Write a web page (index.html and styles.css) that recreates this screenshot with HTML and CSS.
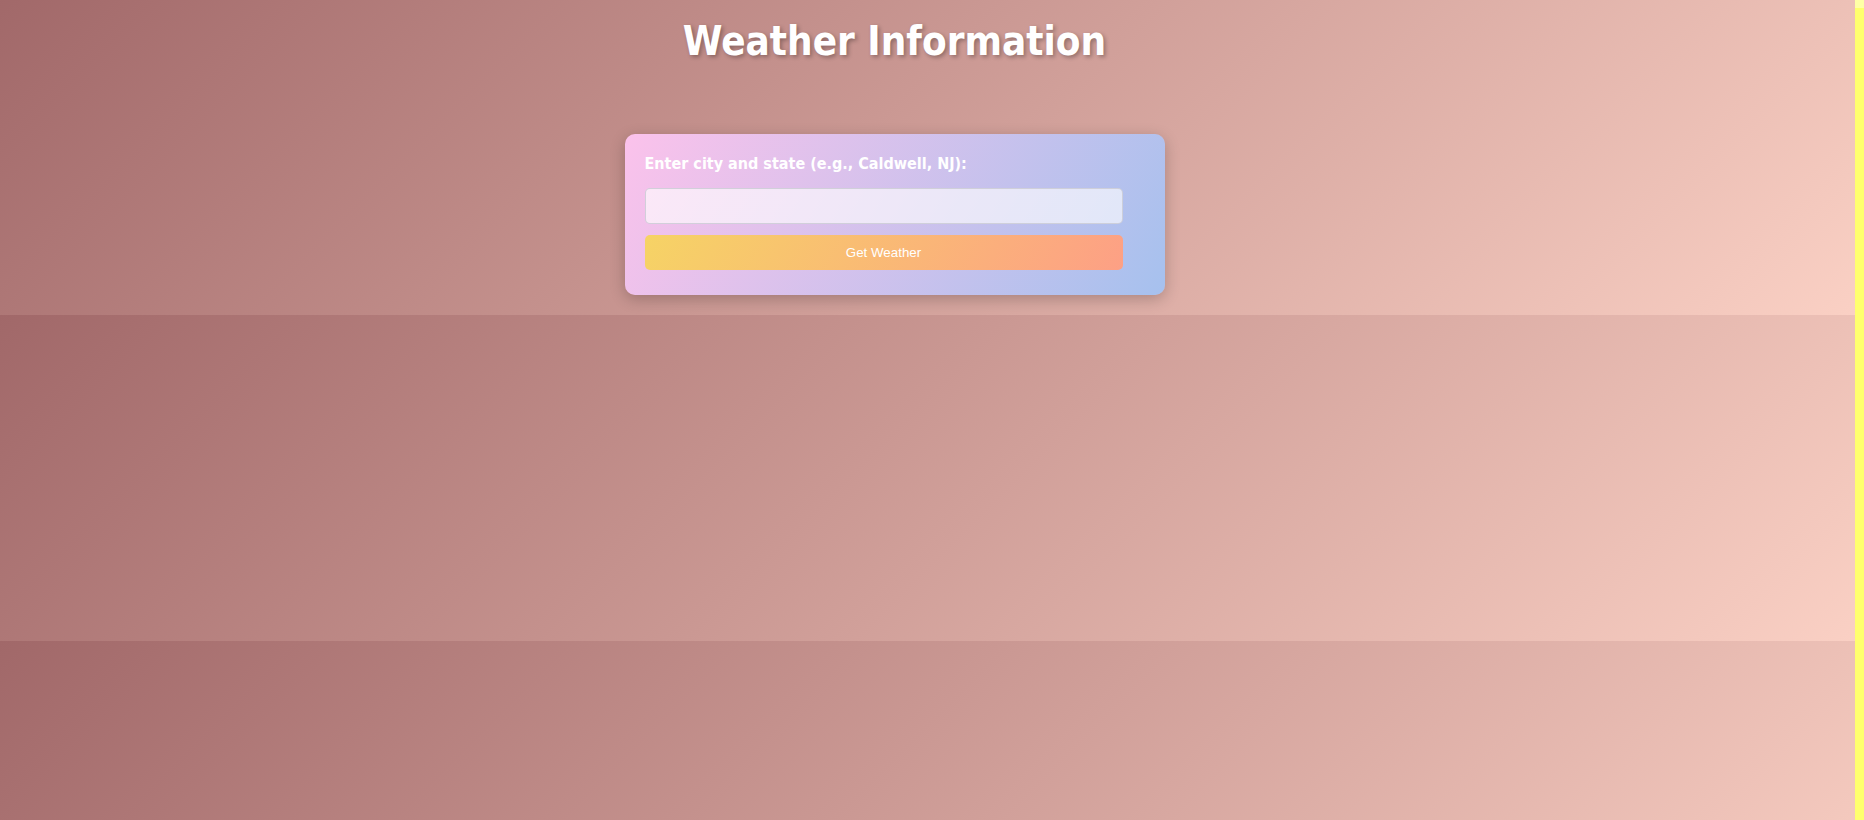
FILE: index.html
```html
<!DOCTYPE html>
<html lang="en">
<head>
<meta charset="utf-8">
<title>Weather Information</title>
<link rel="stylesheet" href="styles.css">
</head>
<body>
  <div class="page">
    <h1 class="title">Weather Information</h1>
    <form class="card">
      <label class="card-label" for="city">Enter city and state (e.g., Caldwell, NJ):</label>
      <input class="card-input" id="city" type="text">
      <button class="card-button" type="button">Get Weather</button>
    </form>
  </div>
  <div class="rail">
    <div class="rail-top"></div>
    <div class="rail-thumb"></div>
  </div>
</body>
</html>
```

FILE: styles.css
```css
html, body {
  margin: 0;
  padding: 0;
  height: 100%;
}

body {
  display: flex;
  overflow: hidden;
  font-family: "DejaVu Sans Condensed", "DejaVu Sans", sans-serif;
}

.page {
  flex: 1;
  display: flex;
  flex-direction: column;
  align-items: center;
  padding-right: 66px;
  background-image: linear-gradient(135deg, #a16869 0%, #fad0c4 100%);
  background-size: 100% 326px;
  background-position: 0 -11px;
  background-repeat: repeat-y;
}

.title {
  margin: 17px 0 0;
  font-size: 40px;
  line-height: 48px;
  font-weight: bold;
  color: #ffffff;
  text-shadow: 2px 2px 4px rgba(0, 0, 0, 0.3);
}

.card {
  box-sizing: border-box;
  width: 540px;
  margin-top: 69px;
  padding: 20px 20px 25px;
  display: flex;
  flex-direction: column;
  border-radius: 10px;
  background: linear-gradient(120deg, #fbc2eb 0%, #a6c1ee 100%);
  box-shadow: 0 4px 15px rgba(0, 0, 0, 0.22);
}

.card-label {
  font-size: 16px;
  line-height: 19px;
  font-weight: bold;
  color: #ffffff;
}

.card-input {
  box-sizing: border-box;
  width: 478px;
  height: 36px;
  margin: 15px 0 0;
  padding: 0 10px;
  border: 1px solid rgba(200, 200, 210, 0.8);
  border-radius: 5px;
  background: rgba(255, 255, 255, 0.62);
  font-family: "Liberation Sans", Arial, sans-serif;
  font-size: 14px;
  outline: none;
}

.card-button {
  box-sizing: border-box;
  width: 478px;
  height: 35px;
  margin-top: 11px;
  padding: 0;
  border: none;
  border-radius: 5px;
  background: linear-gradient(120deg, #f6d365 0%, #fda085 100%);
  color: #ffffff;
  font-family: "Liberation Sans", Arial, sans-serif;
  font-size: 13.33px;
  cursor: pointer;
}

.rail {
  width: 9px;
  display: flex;
  flex-direction: column;
}

.rail-top {
  height: 8px;
  background: #ffffa6;
}

.rail-thumb {
  flex: 1;
  background: #ffff6e;
}
```
